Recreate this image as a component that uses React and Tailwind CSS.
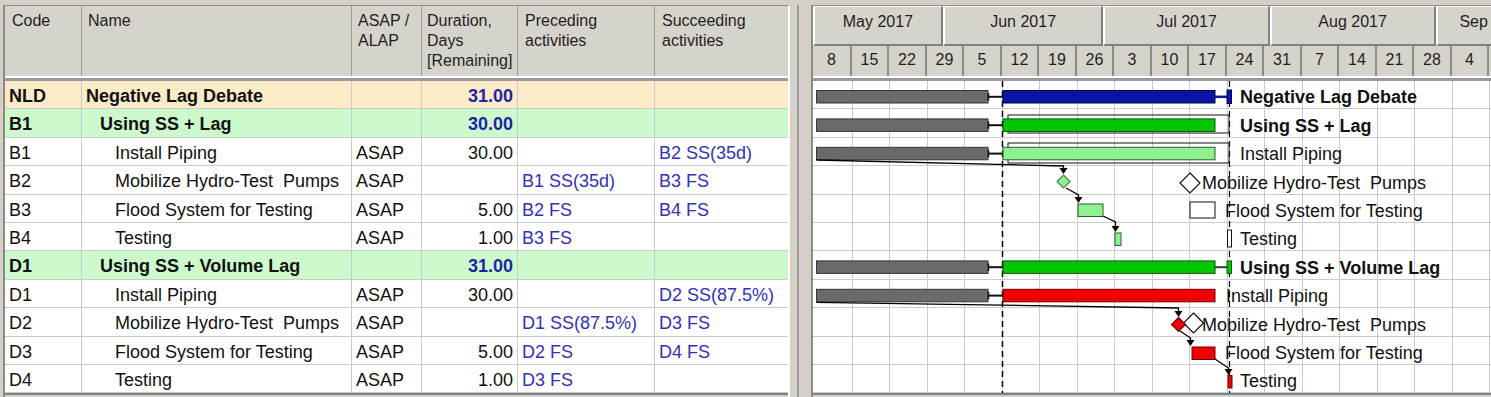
import React from 'react'

const ROW = 28.4

const rows = [
  { code: 'NLD', name: 'Negative Lag Debate', kind: 'root', dur: '31.00' },
  { code: 'B1', name: 'Using SS + Lag', kind: 'sum', dur: '30.00' },
  { code: 'B1', name: 'Install Piping', asap: 'ASAP', dur: '30.00', succ: 'B2 SS(35d)' },
  { code: 'B2', name: 'Mobilize Hydro-Test\u00a0 Pumps', asap: 'ASAP', pred: 'B1 SS(35d)', succ: 'B3 FS' },
  { code: 'B3', name: 'Flood System for Testing', asap: 'ASAP', dur: '5.00', pred: 'B2 FS', succ: 'B4 FS' },
  { code: 'B4', name: 'Testing', asap: 'ASAP', dur: '1.00', pred: 'B3 FS' },
  { code: 'D1', name: 'Using SS + Volume Lag', kind: 'sum', dur: '31.00' },
  { code: 'D1', name: 'Install Piping', asap: 'ASAP', dur: '30.00', succ: 'D2 SS(87.5%)' },
  { code: 'D2', name: 'Mobilize Hydro-Test\u00a0 Pumps', asap: 'ASAP', pred: 'D1 SS(87.5%)', succ: 'D3 FS' },
  { code: 'D3', name: 'Flood System for Testing', asap: 'ASAP', dur: '5.00', pred: 'D2 FS', succ: 'D4 FS' },
  { code: 'D4', name: 'Testing', asap: 'ASAP', dur: '1.00', pred: 'D3 FS' },
]

const months = [
  { label: 'May 2017', w: 'w-[129.8px]' },
  { label: 'Jun 2017', w: 'w-[160.7px]' },
  { label: 'Jul 2017', w: 'w-[166.1px]' },
  { label: 'Aug 2017', w: 'w-[166.1px]' },
  { label: 'Sep 2017', w: 'w-[116px]' },
]

const weeks = ['8', '15', '22', '29', '5', '12', '19', '26', '3', '10', '17', '24', '31', '7', '14', '21', '28', '4', '']

function TableRow({ row }) {
  const bg = row.kind === 'root' ? 'bg-[#fcebc9]' : row.kind === 'sum' ? 'bg-[#cdfacd]' : 'bg-white'
  const bold = row.kind ? 'font-bold' : ''
  const indent = row.kind === 'root' ? 'pl-[4px]' : row.kind === 'sum' ? 'pl-[18px]' : 'pl-[33px]'
  const cell = 'shrink-0 h-full border-r border-[#cacaca] pt-[5px] flex items-start whitespace-nowrap overflow-hidden'
  return (
    <div className={`flex h-[28.4px] border-b border-[#cacaca] leading-[21px] ${bg}`}>
      <div className={`${cell} w-[77px] pl-[4px] ${bold}`}>{row.code}</div>
      <div className={`${cell} w-[270px] ${indent} ${bold}`}>{row.name}</div>
      <div className={`${cell} w-[70px] pl-[4px]`}>{row.asap}</div>
      <div className={`${cell} w-[96px] pr-[4px] justify-end ${row.kind ? 'font-bold text-[#2323a8]' : ''}`}>{row.dur}</div>
      <div className={`${cell} w-[137px] pl-[4px] text-[#3232b9]`}>{row.pred}</div>
      <div className={`${cell} w-[133px] pl-[4px] text-[#3232b9] border-r-0`}>{row.succ}</div>
    </div>
  )
}

// gantt geometry, in chart pixels
const GX1 = 3.5, GX2 = 175, CX1 = 190, CX2 = 402, OX1 = 195, OX2 = 416

function Lead({ t }) {
  return (
    <g>
      <rect x={GX1} y={t + 9.5} width={GX2 - GX1} height={12.5} fill="#6a6a6a" stroke="#363636" />
      <line x1={GX2} y1={t + 15.8} x2={CX1} y2={t + 15.8} stroke="#111" strokeWidth="2" />
      <line x1={GX2 + 0.5} y1={t + 12} x2={GX2 + 0.5} y2={t + 19.5} stroke="#111" strokeWidth="1.5" />
    </g>
  )
}

function Link({ pts, x, y }) {
  return (
    <g>
      <polyline points={pts} fill="none" stroke="#000" strokeWidth="1.3" />
      <polygon points={`${x - 4},${y - 6} ${x + 4},${y - 6} ${x},${y}`} fill="#000" />
    </g>
  )
}

function Diamond({ cx, cy, h, fill, stroke }) {
  return <polygon points={`${cx},${cy - h} ${cx + h},${cy} ${cx},${cy + h} ${cx - h},${cy}`} fill={fill} stroke={stroke} strokeWidth="1.2" />
}

function Label({ x, r, bold, children }) {
  return (
    <text x={x} y={r * ROW + 22.3} fontSize="18" fontWeight={bold ? 'bold' : 'normal'} fill="#111">
      {children}
    </text>
  )
}

function Chart() {
  const W = 678
  const H = 11 * ROW
  const t = (r) => r * ROW
  const vlines = Array.from({ length: 18 }, (_, k) => Math.round(38.7 + 37.5 * k) + 0.5)
  return (
    <svg width={W} height={H} className="block shrink-0">
      <rect width={W} height={H} fill="#fff" />
      {vlines.map(x => <line key={x} x1={x} x2={x} y1={0} y2={H} stroke="#cbcbcb" />)}
      {rows.map((_, r) => (
        <line key={r} x1={0} x2={W} y1={Math.round(t(r + 1)) - 0.5} y2={Math.round(t(r + 1)) - 0.5} stroke="#cbcbcb" />
      ))}

      <line x1={189.5} y1={0} x2={189.5} y2={H} stroke="#000" strokeWidth="1.5" strokeDasharray="6 4" />
      <line x1={416.5} y1={0} x2={416.5} y2={H} stroke="#000" strokeWidth="1.2" strokeDasharray="6 4" />

      {/* NLD */}
      <Lead t={t(0)} />
      <rect x={CX1} y={t(0) + 9.5} width={CX2 - CX1} height={12.5} fill="#0c14a4" stroke="#00005a" />
      <line x1={CX2} y1={t(0) + 15.8} x2={414} y2={t(0) + 15.8} stroke="#0c14a4" strokeWidth="2.5" />
      <rect x={414} y={t(0) + 9} width={4.5} height={13.5} fill="#0c14a4" stroke="#00005a" />

      {/* B1 summary */}
      <rect x={OX1} y={t(1) + 5.6} width={OX2 - OX1} height={18} fill="none" stroke="#111" />
      <Lead t={t(1)} />
      <rect x={CX1} y={t(1) + 9.5} width={CX2 - CX1} height={12.5} fill="#00c800" stroke="#14501a" />

      {/* B1 install */}
      <rect x={OX1} y={t(2) + 5.2} width={OX2 - OX1} height={20} fill="none" stroke="#111" />
      <Lead t={t(2)} />
      <rect x={CX1} y={t(2) + 9.5} width={CX2 - CX1} height={12.5} fill="#8ff08f" stroke="#2f5a2f" />
      <Link pts="3.5,79 250.5,85 250.5,88" x={250.5} y={93} />

      {/* B2 */}
      <Diamond cx={377} cy={102} h={10} fill="#fff" stroke="#111" />
      <Diamond cx={250.5} cy={100.5} h={6.5} fill="#8ff08f" stroke="#4f7f4f" />
      <Link pts="253,107 265.5,114 265.5,116" x={265.5} y={122} />

      {/* B3 */}
      <rect x={377} y={121} width={25} height={16} fill="none" stroke="#111" />
      <rect x={265} y={123} width={25} height={12.5} fill="#8ff08f" stroke="#2f5a2f" />
      <Link pts="290,135 302.5,141 302.5,145" x={302.5} y={151} />

      {/* B4 */}
      <rect x={414.5} y={149} width={4} height={17} fill="#fff" stroke="#111" />
      <rect x={302} y={152} width={6} height={12.5} fill="#8ff08f" stroke="#2f5a2f" />

      {/* D1 summary */}
      <Lead t={t(6)} />
      <rect x={CX1} y={t(6) + 9.5} width={CX2 - CX1} height={12.5} fill="#00c800" stroke="#14501a" />
      <line x1={CX2} y1={t(6) + 15.8} x2={414} y2={t(6) + 15.8} stroke="#14501a" strokeWidth="2" />
      <rect x={414} y={t(6) + 9.5} width={4.5} height={12.5} fill="#00c800" stroke="#14501a" />

      {/* D1 install */}
      <Lead t={t(7)} />
      <rect x={CX1} y={t(7) + 9.5} width={CX2 - CX1} height={12.5} fill="#f00000" stroke="#6a0000" />
      <Link pts="3.5,221.3 365.5,227 365.5,230" x={365.5} y={236} />

      {/* D2 */}
      <Diamond cx={380.5} cy={242} h={10} fill="#fff" stroke="#111" />
      <Diamond cx={365.5} cy={243.5} h={7} fill="#f00000" stroke="#6a0000" />
      <Link pts="367,250 377.5,257 377.5,259" x={377.5} y={265} />

      {/* D3 */}
      <rect x={379} y={266} width={23} height={12.5} fill="#f00000" stroke="#6a0000" />
      <Link pts="402,278 415.5,287 415.5,288" x={415.5} y={294} />

      {/* D4 */}
      <rect x={415} y={294.5} width={4} height={12.5} fill="#f00000" stroke="#6a0000" />

      <Label x={427} r={0} bold>Negative Lag Debate</Label>
      <Label x={427} r={1} bold>Using SS + Lag</Label>
      <Label x={427} r={2}>Install Piping</Label>
      <Label x={389} r={3}>Mobilize Hydro-Test{'\u00a0'} Pumps</Label>
      <Label x={412} r={4}>Flood System for Testing</Label>
      <Label x={427} r={5}>Testing</Label>
      <Label x={427} r={6} bold>Using SS + Volume Lag</Label>
      <Label x={413} r={7}>Install Piping</Label>
      <Label x={389} r={8}>Mobilize Hydro-Test{'\u00a0'} Pumps</Label>
      <Label x={412} r={9}>Flood System for Testing</Label>
      <Label x={427} r={10}>Testing</Label>
    </svg>
  )
}

export default function App() {
  const head = 'shrink-0 h-full border-r border-[#9c9c9c] pt-[5px]'
  return (
    <div className="w-[1491px] h-[397px] bg-[#d4d0c8] overflow-hidden flex pt-[5px] pl-[3px] font-['Liberation_Sans',Arial,sans-serif] text-[18px] text-[#111]">
      {/* activity table */}
      <div className="w-[787px] shrink-0 flex flex-col border-l-2 border-t border-[#8a8a8a] border-r-2 border-r-white">
        <div className="flex h-[72px] shrink-0 border-b-2 border-white bg-[#d6d3cc] text-[16px] leading-[20px] text-[#1e1e1e]">
          <div className={`${head} w-[77px] pl-[7px]`}>Code</div>
          <div className={`${head} w-[270px] pl-[6px]`}>Name</div>
          <div className={`${head} w-[70px] pl-[6px]`}>ASAP /<br />ALAP</div>
          <div className={`${head} w-[96px] pl-[5px]`}>Duration,<br />Days<br />[Remaining]</div>
          <div className={`${head} w-[137px] pl-[7px]`}>Preceding<br />activities</div>
          <div className={`${head} w-[133px] pl-[7px] border-r-0`}>Succeeding<br />activities</div>
        </div>
        <div className="flex flex-col border-t-[3px] border-b-2 border-[#9a9a9a] border-b-[#808080]">
          {rows.map((row, i) => <TableRow key={i} row={row} />)}
        </div>
      </div>

      {/* splitter */}
      <div className="w-[21px] shrink-0 flex">
        <div className="ml-[7px] w-[2px] bg-[#9c9c9c]" />
      </div>

      {/* gantt */}
      <div className="w-[680px] shrink-0 flex flex-col overflow-hidden border-l-2 border-t border-[#8a8a8a]">
        <div className="flex h-[40px] shrink-0 bg-[#d6d3cc] text-[16px] leading-[20px] text-[#1e1e1e]">
          {months.map(m => (
            <div key={m.label} className={`${m.w} shrink-0 h-full text-center pt-[5px] whitespace-nowrap border-t border-l-2 border-t-white border-l-white border-r-2 border-b-2 border-r-[#808080] border-b-[#808080]`}>
              {m.label}
            </div>
          ))}
        </div>
        <div className="flex h-[32px] shrink-0 bg-[#d6d3cc] text-[16px] leading-[20px] text-[#1e1e1e] border-b-2 border-white">
          {weeks.map((w, i) => (
            <div key={i} className={`${i === 0 ? 'w-[38.7px]' : 'w-[37.5px]'} shrink-0 h-full text-center pt-[4px] border-r-2 border-[#8c8c8c]`}>
              {w}
            </div>
          ))}
        </div>
        <div className="flex flex-col border-t-[3px] border-b-2 border-[#9a9a9a] border-b-[#808080]">
          <Chart />
        </div>
      </div>
    </div>
  )
}
